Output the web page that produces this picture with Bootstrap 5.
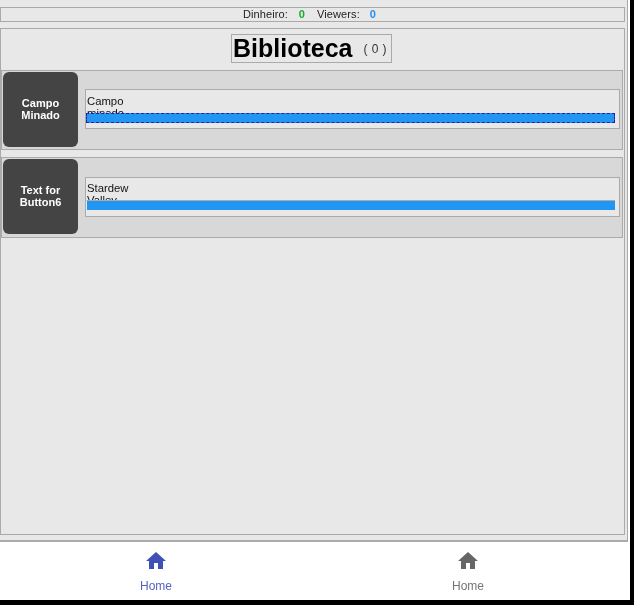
<!DOCTYPE html>
<html lang="pt">
<head>
<meta charset="utf-8">
<title>Biblioteca</title>
<link href="https://cdn.jsdelivr.net/npm/bootstrap@5.3.0/dist/css/bootstrap.min.css" rel="stylesheet">
<style>
html, body { height: 100%; background: #000; overflow: hidden; }
body { font-family: "Liberation Sans", Arial, sans-serif; color: #111; }
.app-shell { width: 630px; height: 600px; background: #fff; will-change: transform; }
.app-area { width: 628px; height: 542px; background: #e8e8e8; border-right: 1px solid #aaa; border-bottom: 2px solid #aaa; padding: 7px 2px 0 0; }
.stat-bar { height: 15px; border: 1px solid #aaa; padding-right: 6px; font-size: 11px; line-height: 13px; letter-spacing: .1px; color: #222; }
.stat-green { color: #1aab2e; font-weight: 700; margin: 0 12px 0 11px; }
.stat-blue { color: #2190f0; font-weight: 700; margin-left: 10px; }
.lib-panel { height: 507px; margin-top: 6px; border: 1px solid #aaa; }
.lib-head { height: 41px; padding: 5px 2px 0 0; }
.lib-title { height: 29px; width: 161px; border: 1px solid #aaa; padding-left: 1px; white-space: nowrap; }
.lib-name { font-size: 25px; font-weight: 700; line-height: 27px; color: #000; }
.lib-count { font-size: 12px; letter-spacing: 1.2px; word-spacing: -1.5px; margin-left: 11px; color: #333; }
.game-row { height: 80px; width: 622px; background: #d8d8d8; border: 1px solid #aaa; margin-bottom: 7px; padding: 1px 2px 1px 1px; }
.game-row.tall-row { height: 81px; }
.game-btn { width: 75px; height: 75px; padding-bottom: 2px; background: #444; border-radius: 6px; color: #fff; font-size: 11px; font-weight: 700; line-height: 12px; text-align: center; flex: none; }
.game-box { width: 535px; height: 40px; margin: 17px 0 0 7px; border: 1px solid #aaa; background: #e8e8e8; padding: 5px 4px 0 0; }
.game-box.tall { margin-top: 18px; padding-top: 4px; }
.game-text { width: 50px; height: 18px; overflow: hidden; font-size: 11.3px; line-height: 12px; color: #111; padding-left: 1px; }
.game-bar { height: 10px; background: #2196f3; }
.game-bar.focused { outline: 1px dashed #2a1fa8; outline-offset: -1px; }
.game-bar.plain { height: 11px; border-top: 1px solid #aaa; border-left: 1px solid #e8e8e8; border-bottom: 1px solid #e8e8e8; }
.tab-bar { width: 624px; height: 58px; }
.tab-item { width: 312px; padding-top: 7px; font-size: 12px; line-height: 14px; }
.tab-item svg { display: block; margin-bottom: 6px; }
.tab-on { color: #5563c1; }
.tab-on svg { fill: #3f51b5; }
.tab-off { color: #757575; }
.tab-off svg { fill: #666; }
</style>
</head>
<body class="m-0">
<div class="app-shell">
  <div class="app-area">
    <div class="stat-bar d-flex justify-content-center">
      <span>Dinheiro:</span><span class="stat-green">0</span><span>Viewers:</span><span class="stat-blue">0</span>
    </div>
    <div class="lib-panel">
      <div class="lib-head d-flex justify-content-center">
        <div class="lib-title d-flex align-items-center">
          <span class="lib-name">Biblioteca</span><span class="lib-count">( 0 )</span>
        </div>
      </div>
      <div class="game-row d-flex">
        <div class="game-btn d-flex align-items-center justify-content-center">Campo<br>Minado</div>
        <div class="game-box">
          <div class="game-text">Campo minado</div>
          <div class="game-bar focused"></div>
        </div>
      </div>
      <div class="game-row tall-row d-flex">
        <div class="game-btn d-flex align-items-center justify-content-center">Text for<br>Button6</div>
        <div class="game-box tall">
          <div class="game-text">Stardew Valley</div>
          <div class="game-bar plain"></div>
        </div>
      </div>
    </div>
  </div>
  <div class="tab-bar d-flex">
    <div class="tab-item tab-on d-flex flex-column align-items-center">
      <svg width="24" height="24" viewBox="0 0 24 24"><path d="M10 20v-6h4v6h5v-8h3L12 3 2 12h3v8z"/></svg>
      <span>Home</span>
    </div>
    <div class="tab-item tab-off d-flex flex-column align-items-center">
      <svg width="24" height="24" viewBox="0 0 24 24"><path d="M10 20v-6h4v6h5v-8h3L12 3 2 12h3v8z"/></svg>
      <span>Home</span>
    </div>
  </div>
</div>
</body>
</html>
